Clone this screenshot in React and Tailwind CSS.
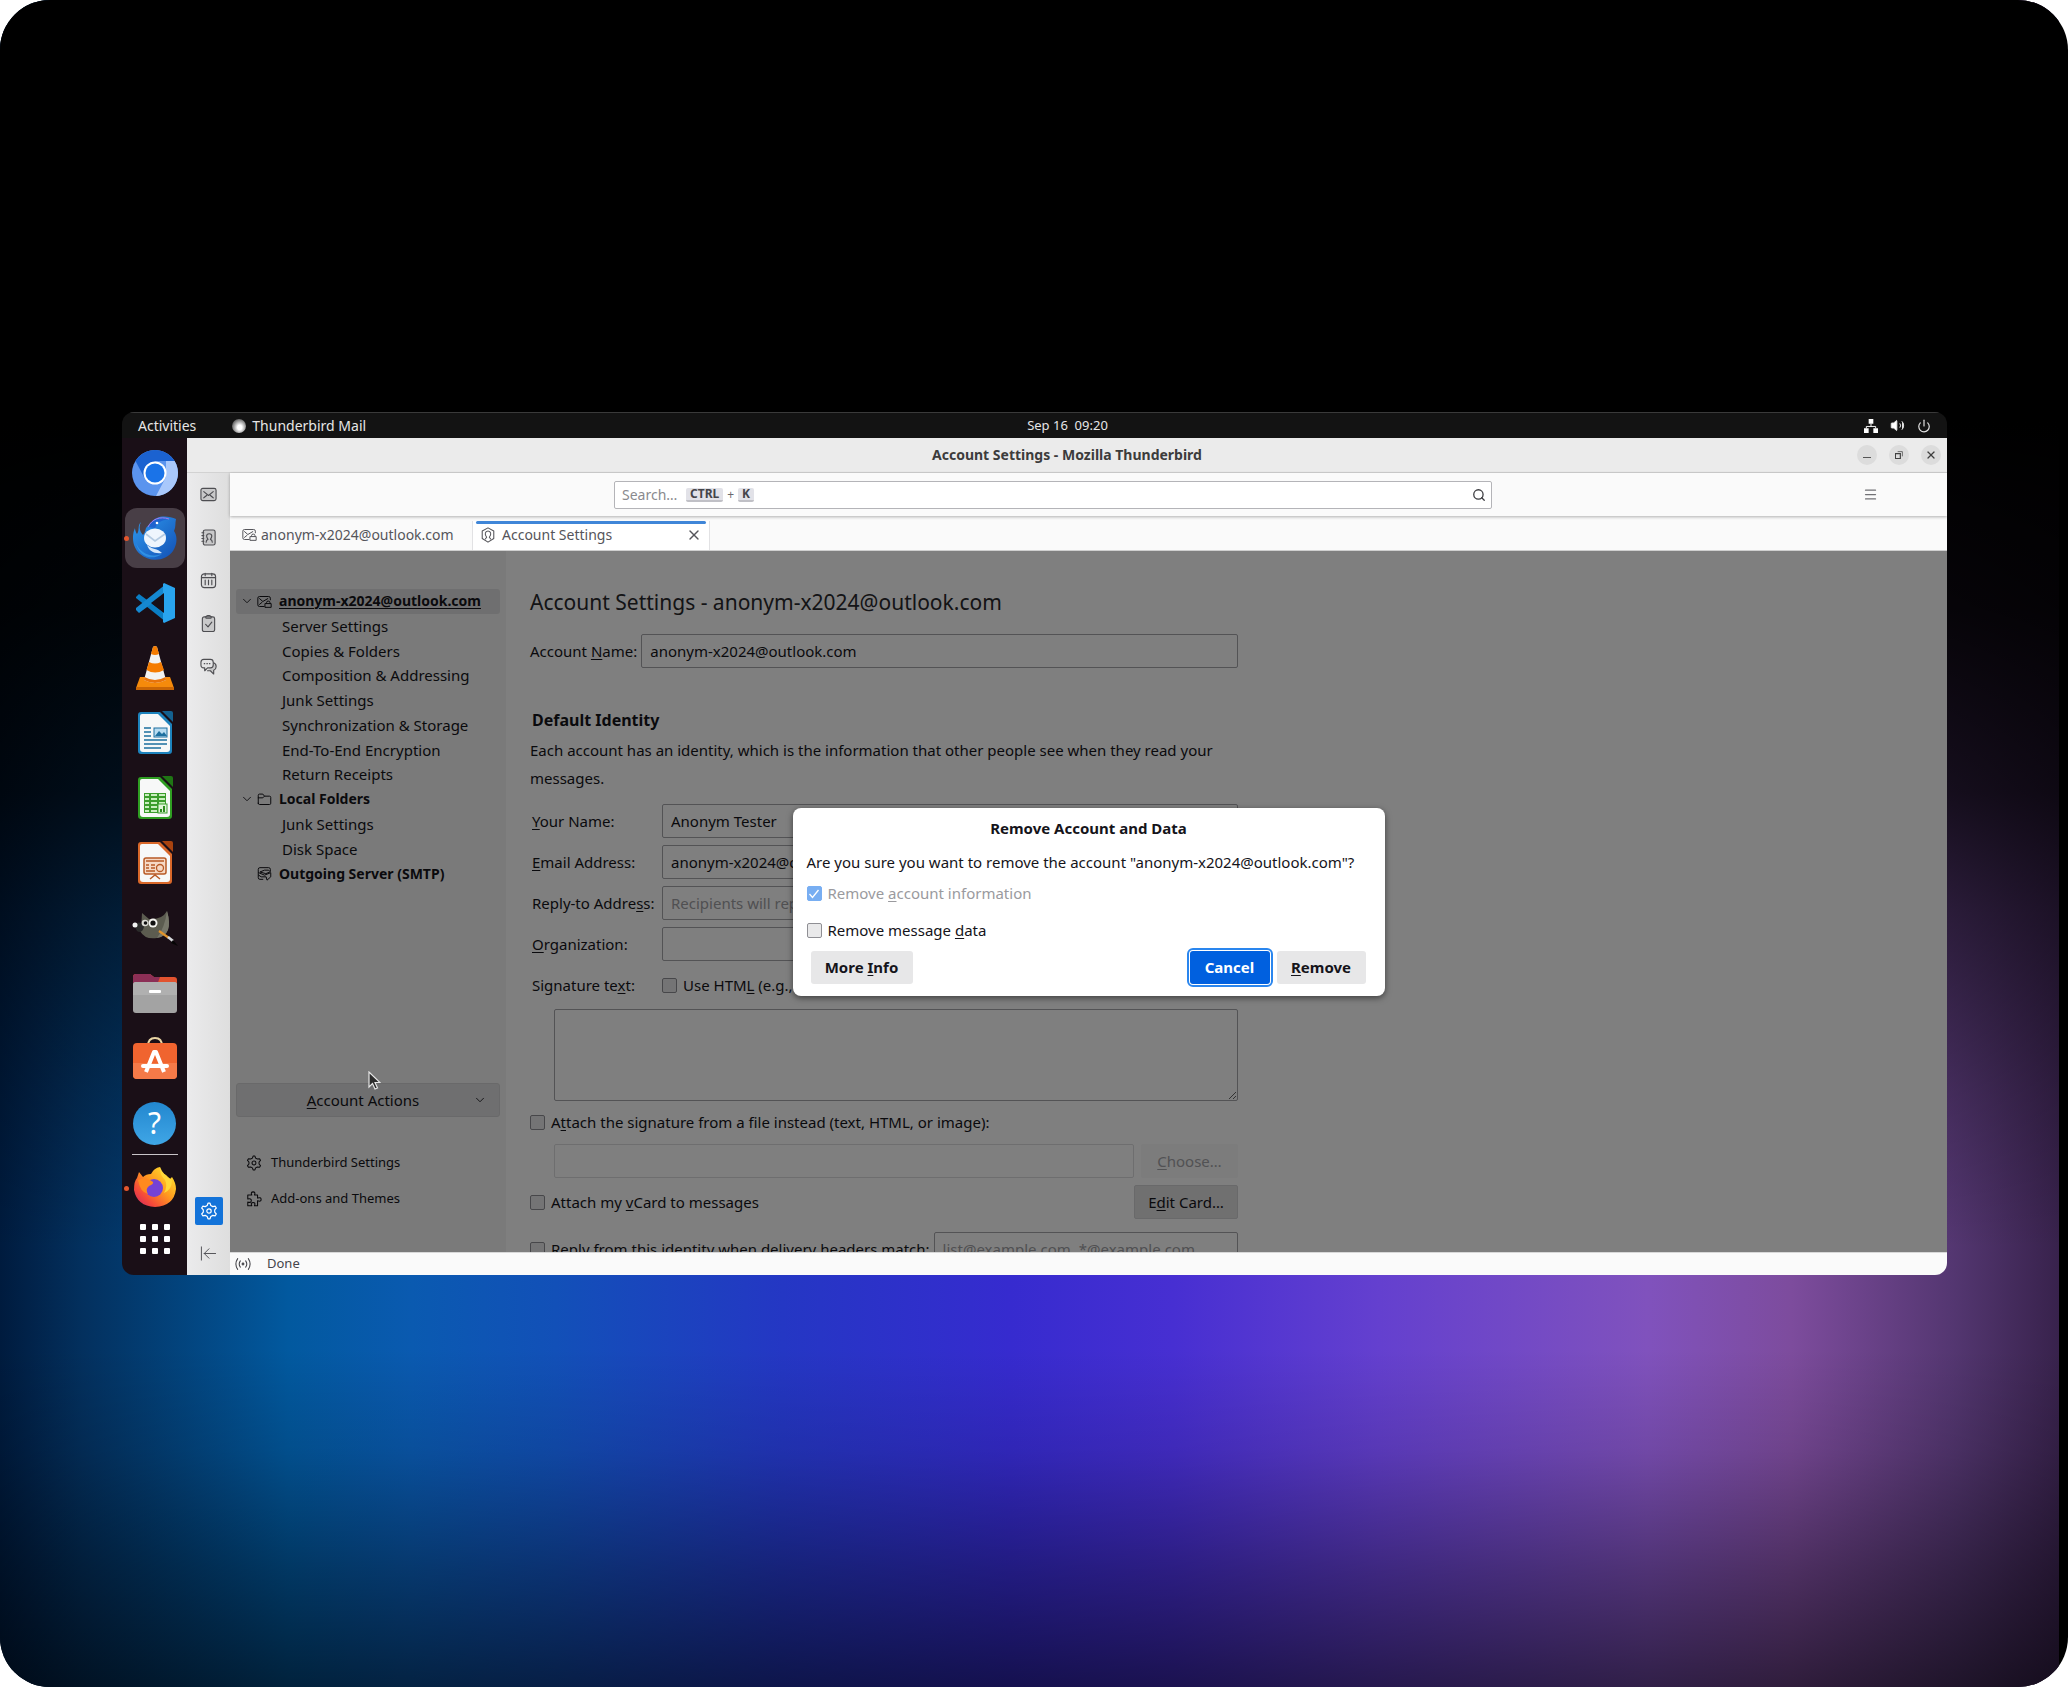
import React from 'react';
import { ChevronDown, Menu, Power, Search, Volume2, X } from 'lucide-react';

/* ---------- Dock artwork ---------- */

const ChromiumIcon = () => (
  <svg className="size-[46px]" viewBox="0 0 46 46">
    <circle cx="23" cy="23" r="23" fill="#5b94ee" />
    <path d="M3.5 11A23 23 0 0 1 42.6 11H23L12 27Z" fill="#1b62d0" />
    <path d="M42.6 11A23 23 0 0 1 24 46L34 27V11Z" fill="#a9c8fb" />
    <circle cx="23" cy="23" r="11.5" fill="#fff" />
    <circle cx="23" cy="23" r="9.5" fill="#1a73e8" />
  </svg>
);

const ThunderbirdIcon = () => (
  <svg className="size-[46px]" viewBox="0 0 46 46">
    <defs>
      <linearGradient id="tb" x1="0" y1="0" x2="1" y2="1">
        <stop offset="0" stopColor="#2f9bf0" />
        <stop offset="1" stopColor="#124fb4" />
      </linearGradient>
    </defs>
    <path
      d="M9 7C5 11 8 15 5 19C3 16 3 13 3 13C-1 22 1 33 8 39C18 48 34 46 41 36C46 28 45 20 42 16C44 12 43 8 44 4C39 2 31 0 25 3C20 5 18 9 14 13C13 17 12 19 11 20C7 16 7 11 9 7Z"
      fill="url(#tb)"
    />
    <path d="M16 12C20 4 28 1 37 4C29 5 25 8 23 13Z" fill="#1e63cf" />
    <path d="M16 12C20 4 28 1 37 4" fill="none" stroke="#a77bea" strokeWidth="1" />
    <path d="M4 28C8 38 18 43 30 39C20 46 7 42 4 28Z" fill="#3aa5f2" opacity=".6" />
    <ellipse cx="23" cy="23" rx="11" ry="9.5" fill="#eef5fd" />
    <path d="M14 19L23 26L33 19" fill="none" stroke="#b5cbe2" strokeWidth="1.6" />
    <path d="M15 30C21 35 25 33 30 38C22 39 17 36 15 30Z" fill="#d3e6fa" />
    <circle cx="25" cy="8" r="1.3" fill="#fff" />
  </svg>
);

const VsCodeIcon = () => (
  <svg className="size-10" viewBox="0 0 40 40">
    <path d="M1 14L4 11L31 31V39L1 15Z" fill="#0a7dc4" />
    <path d="M1 27L4 30L31 10V1L1 25Z" fill="#1588d1" />
    <path d="M29 0L40 5V35L29 40L28 39V1Z" fill="#29a4ee" />
    <path d="M29 10V30L16 20Z" fill="#170f17" />
  </svg>
);

const VlcIcon = () => (
  <svg className="h-11 w-[38px]" viewBox="0 0 38 44">
    <path d="M4 31H34L38 42V44H0V42Z" fill="#f58a0b" />
    <path d="M0 41H38V44H0Z" fill="#c96505" />
    <path d="M17 1Q19 -1 21 1L30 34Q19 40 8 34Z" fill="#f3f3f1" />
    <path d="M17 1Q19 -1 21 1L23 8Q19 10 15 8Z" fill="#f57c00" />
    <path d="M13 16Q19 19 25 16L28 24Q19 29 10.500 24Z" fill="#f57c00" />
    <path d="M8.500 31Q19 37 29.500 31L30 34Q19 40 8 34Z" fill="#e8730a" />
  </svg>
);

const DocShape = ({ color, dark, children }) => (
  <svg className="h-11 w-9" viewBox="0 0 36 44">
    <path d="M4 1H23L35 13V40Q35 43 32 43H4Q1 43 1 40V4Q1 1 4 1Z" fill={color} />
    <path d="M5 3H21L33 15V38Q33 41 30 41H6Q3 41 3 38V5Q3 3 5 3Z" fill="#f7f8f8" />
    <path d="M25 0H34Q36 0 36 2V11Z" fill={dark} />
    {children}
  </svg>
);

const WriterIcon = () => (
  <DocShape color="#1d83bd" dark="#14618f">
    <path d="M7 17H14M7 21H14M7 25H14M7 29H30M7 33H30M7 37H24" stroke="#1d6f9f" strokeWidth="1.700" />
    <rect x="17" y="17" width="13" height="9" fill="#b8dcf1" stroke="#1d6f9f" />
    <path d="M18 25L22 20L25 23L27 21L30 25Z" fill="#1d6f9f" />
  </DocShape>
);

const CalcIcon = () => (
  <DocShape color="#2f9e22" dark="#1f7514">
    <rect x="7" y="17" width="22" height="20" fill="#3b9d2c" />
    <path
      d="M8 18h4v2h-4zM14 18h6v2h-6zM22 18h6v2h-6zM8 22h4v2h-4zM14 22h6v2h-6zM22 22h6v2h-6zM8 26h4v2h-4zM14 26h6v2h-6zM22 26h6v2h-6zM8 30h4v2h-4zM14 30h6v2h-6zM8 34h4v2h-4zM14 34h6v2h-6z"
      fill="#c9efbf"
    />
    <rect x="21" y="28" width="9" height="9" fill="#dff5d8" stroke="#3b9d2c" />
    <path d="M24 36V33M27 36V30" stroke="#2c8a1e" strokeWidth="2" />
  </DocShape>
);

const ImpressIcon = () => (
  <DocShape color="#d9682a" dark="#a8430f">
    <rect x="7" y="17" width="22" height="16" rx="2" fill="#f6d9c5" stroke="#b85a26" strokeWidth="1.500" />
    <path d="M9 20H27M9 24H12M14 24H18M9 27H12M14 27H18M9 30H18" stroke="#b85a26" strokeWidth="1.500" />
    <circle cx="23" cy="27" r="3.500" fill="none" stroke="#b85a26" strokeWidth="1.300" />
    <path d="M18 33V35M13 38L18 34L23 38" fill="none" stroke="#b85a26" strokeWidth="1.500" />
  </DocShape>
);

const GimpIcon = () => (
  <svg className="h-[38px] w-[46px]" viewBox="0 0 46 38">
    <path d="M10 4L17 10Q30 11 35 2Q42 26 25 29Q13 31 8 22Q10 12 10 4Z" fill="#5c5c50" />
    <path d="M35 2Q42 26 25 29Q33 18 35 2Z" fill="#77776a" />
    <path d="M2 16Q8 10 12 18Q10 25 5 22Z" fill="#2b2b2b" />
    <circle cx="3" cy="16" r="2.500" fill="#f1f1f1" />
    <circle cx="13" cy="14" r="3.300" fill="#dcdcd6" />
    <circle cx="21" cy="14" r="4.500" fill="#f4f4f0" />
    <circle cx="13.500" cy="14" r="1.800" fill="#111" />
    <circle cx="21" cy="14" r="2.600" fill="#111" />
    <path d="M27 22L37 29" stroke="#e2942c" strokeWidth="2.200" />
    <path d="M36 28L41 32" stroke="#d8dadd" strokeWidth="2.600" />
    <path d="M41 31L46 37L39 34Z" fill="#050505" />
  </svg>
);

const FilesIcon = () => (
  <svg className="h-10 w-[44px]" viewBox="0 0 44 40">
    <path d="M3 1H17L21 4H41Q44 4 44 7V20H0V4Q0 1 3 1Z" fill="#e2532f" />
    <path d="M3 1H17L21 4H27L24 12H0V4Q0 1 3 1Z" fill="#8c2f56" />
    <rect y="9" width="44" height="31" rx="3" fill="#a3a3a3" />
    <path d="M3 9H41Q44 9 44 12V22H0V12Q0 9 3 9Z" fill="#b0b0b0" />
    <rect x="16" y="17" width="12" height="3" rx="1" fill="#fff" />
  </svg>
);

const SoftwareIcon = () => (
  <svg className="h-[42px] w-[44px]" viewBox="0 0 44 42">
    <path d="M15 9Q15 1 22 1Q29 1 29 9" fill="none" stroke="#e9d5a4" strokeWidth="2" />
    <rect y="6" width="44" height="36" rx="4" fill="#f0642f" />
    <path d="M0 26H44V38Q44 42 40 42H4Q0 42 0 38Z" fill="#f57a48" />
    <path d="M13 35L21 15H23L31 35" fill="none" stroke="#fff" strokeWidth="4" strokeLinejoin="round" />
    <path d="M10 29H34" stroke="#fff" strokeWidth="4" strokeLinecap="round" />
  </svg>
);

const HelpIcon = () => (
  <span className="flex size-[43px] items-center justify-center rounded-full bg-gradient-to-b from-[#2287cf] to-[#3fa6e6] font-['Noto_Sans',sans-serif] text-3xl text-white">
    ?
  </span>
);

const FirefoxIcon = () => (
  <svg className="size-[42px]" viewBox="0 0 42 42">
    <defs>
      <linearGradient id="fx" x1="1" y1="0" x2="0" y2="1">
        <stop offset=".1" stopColor="#ffe22e" />
        <stop offset=".45" stopColor="#ff9a1f" />
        <stop offset=".75" stopColor="#f5483a" />
        <stop offset="1" stopColor="#c4206a" />
      </linearGradient>
    </defs>
    <path
      d="M5 6L9 11Q12 8 17 8Q20 2 26 1Q26 6 32 9L36 13L38 11Q42 17 42 23Q40 40 21 41Q3 40 0 24Q0 15 3 12Z"
      fill="url(#fx)"
    />
    <circle cx="20" cy="22" r="9" fill="#7542d6" />
    <path d="M4 14Q12 10 19 16Q20 18 15 20Q11 23 14 28Q6 26 4 14Z" fill="#ff8a1e" />
    <path d="M26 1Q25 8 31 14Q34 20 30 27Q38 24 38 14Q29 9 26 1Z" fill="#ffd83a" />
  </svg>
);

const AppGridIcon = () => (
  <span className="grid grid-cols-3 gap-[6px]">
    {Array.from({ length: 9 }, (_, i) => (
      <span key={i} className="size-[6px] rounded-[1px] bg-white" />
    ))}
  </span>
);

const DOCK = [
  { name: 'Chromium', Icon: ChromiumIcon },
  { name: 'Thunderbird Mail', Icon: ThunderbirdIcon, active: true },
  { name: 'Visual Studio Code', Icon: VsCodeIcon },
  { name: 'VLC media player', Icon: VlcIcon },
  { name: 'LibreOffice Writer', Icon: WriterIcon },
  { name: 'LibreOffice Calc', Icon: CalcIcon },
  { name: 'LibreOffice Impress', Icon: ImpressIcon },
  { name: 'GIMP', Icon: GimpIcon },
  { name: 'Files', Icon: FilesIcon },
  { name: 'Ubuntu Software', Icon: SoftwareIcon },
  { name: 'Help', Icon: HelpIcon },
];

/* ---------- Line icons ---------- */

const Line = ({ className = 'size-[17px]', children }) => (
  <svg
    className={className}
    viewBox="0 0 18 18"
    fill="none"
    stroke="currentColor"
    strokeWidth="1.200"
    strokeLinecap="round"
    strokeLinejoin="round"
  >
    {children}
  </svg>
);

const MailIcon = () => (
  <Line>
    <rect x="1" y="2.500" width="16" height="13" rx="2" fill="#c9c9ca" />
    <path d="M4 6L9 10L14 6M4 12.500L7 10M14 12.500L11 10" />
  </Line>
);

const AddressBookIcon = () => (
  <Line>
    <rect x="3.500" y="1" width="12.500" height="16" rx="2" fill="#c9c9ca" />
    <path d="M2 4H4M2 7H4M2 10H4M2 13H4" />
    <path d="M6.500 14Q6.500 11.500 8.500 11Q7 9 7 7.500Q7 5 9.700 5Q12.500 5 12.500 7.500Q12.500 9 11 11Q13 11.500 13 14" />
  </Line>
);

const CalendarIcon = () => (
  <Line>
    <rect x="1.500" y="2" width="15" height="14.500" rx="3" fill="#dcdcdd" />
    <path d="M2 6H16M5.500 1.500V4M12.500 1.500V4M5.500 8.500V13.500M9 8.500V13.500M12.500 8.500V13.500" />
  </Line>
);

const TasksIcon = () => (
  <Line>
    <rect x="2.500" y="2" width="13" height="15.500" rx="2" fill="#c9c9ca" />
    <path d="M6 2Q9 -1 12 2L11.500 3.500H6.500ZM6 10L8.500 12.500L12.500 7.500" />
  </Line>
);

const ChatIcon = () => (
  <Line>
    <path d="M14 5Q17.500 6 17 9.500Q17 12 14.500 13V17L11 13.500H8" fill="#c9c9ca" />
    <path d="M4 1.500H11Q14 1.500 14 4.500V7.500Q14 10.500 11 10.500H8L5 13.500V10.500H4Q1 10.500 1 7.500V4.500Q1 1.500 4 1.500Z" fill="#e4e4e5" />
    <path d="M4.500 6H5M7.300 6H7.800M10 6H10.500" />
  </Line>
);

const GearIcon = ({ className }) => (
  <Line className={className}>
    <path d="M7.200 3.500L8 1.200H10L10.800 3.500L12.800 4.600L15.200 4.200L16.300 6L14.700 7.900V10.100L16.300 12L15.200 13.800L12.800 13.400L10.800 14.500L10 16.800H8L7.200 14.500L5.200 13.400L2.800 13.800L1.700 12L3.300 10.100V7.900L1.700 6L2.800 4.200L5.200 4.600Z" />
    <circle cx="9" cy="9" r="2.200" />
  </Line>
);

const PuzzleIcon = () => (
  <Line className="size-4">
    <path d="M6.500 4.500Q5 1 8 1Q11 1 9.500 4.500H13V8Q17 6.500 17 9.500Q17 12.500 13 11V16.500H9.500Q11 13 8 13Q5 13 6.500 16.500H2V12.500Q6 13.500 6 10.700Q6 8 2 9V4.500Z" />
  </Line>
);

const CollapseIcon = () => (
  <Line>
    <path d="M1.500 2V16M16.500 9H4.500M9.500 4L4.500 9L9.500 14" strokeWidth="1" />
  </Line>
);

const MailLockIcon = () => (
  <Line className="size-[15px]">
    <path d="M8.500 15H3Q1 15 1 13V5Q1 3 3 3H14Q16 3 16 5V7M3 5.500L7 9L13 5.500M3 12.500L6 10" />
    <path d="M10 11.500H17V16H10ZM11.500 11V10Q11.500 8.500 13.500 8.500Q15.500 8.500 15.500 10V11" />
  </Line>
);

const OutgoingIcon = () => (
  <Line className="size-[15px]">
    <path d="M7 16H3.500Q1.500 16 1.500 14V4Q1.500 2 3.500 2H14Q16 2 16 4V6M4 7L9 5H14L16 7L11 9Z" />
    <path d="M2 8L9 11L16.500 8V13L12 17L11 13H5L2 11" />
  </Line>
);

const FolderIcon = () => (
  <Line className="size-[15px]">
    <path d="M1.500 13.500V4Q1.500 2.500 3 2.500H7L9 5H15Q16.500 5 16.500 6.500V13.500Q16.500 15 15 15H3Q1.500 15 1.500 13.500ZM1.500 7H7L9 5" />
  </Line>
);

const AccountTabIcon = () => (
  <Line className="size-4">
    <path d="M9 1L15.500 4.500V13L9 17L2.500 13V4.500Z" />
    <path d="M6 13.500L7.500 11.500Q5.500 9 6 7Q6.500 4.500 9 4.500Q11.500 4.500 12 7Q12.500 9 10.500 11.500L12 13.500" />
  </Line>
);

const NetworkIcon = () => (
  <svg className="size-[14px]" viewBox="0 0 15 15" fill="#fff">
    <path d="M5 0h5v5H5zM0 10h5v5H0zM10 10h5v5h-5z" />
    <path d="M7.500 5V8M2.500 10V8H12.500V10" fill="none" stroke="#fff" />
  </svg>
);

const StatusIcon = () => (
  <Line className="size-4">
    <path d="M3 3Q-1 9 3 15M6 5.500Q3.500 9 6 12.500M15 3Q19 9 15 15M12 5.500Q14.500 9 12 12.500" />
    <circle cx="9" cy="9" r="1" />
  </Line>
);

const Cursor = () => (
  <svg className="h-[19px] w-[13px]" viewBox="0 0 13 19">
    <path d="M1 1V16L4.500 12.500L7 18L9.500 17L7 11.500H12Z" fill="#2c2c2c" stroke="#e6e6e6" strokeWidth="1.200" />
  </svg>
);

/* ---------- Small parts ---------- */

// Underlined access key
const Key = ({ children }) => <span className="underline decoration-1 underline-offset-2">{children}</span>;

const CheckBox = ({ id, className = 'border-[#8f8f94] bg-[#e9e9ea]', children, ...rest }) => (
  <div className="flex items-center gap-[6px]">
    <span className="grid size-[15px] shrink-0 place-items-center">
      <input
        id={id}
        type="checkbox"
        className={`col-start-1 row-start-1 size-[15px] appearance-none rounded-[2px] border ${className}`}
        {...rest}
      />
      {rest.defaultChecked && (
        <svg className="pointer-events-none col-start-1 row-start-1 size-3" viewBox="0 0 12 12" fill="none" stroke="#fff" strokeWidth="1.300">
          <path d="M1.500 6L4.500 9.500L10.500 2" />
        </svg>
      )}
    </span>
    <label htmlFor={id} className={rest.disabled ? 'text-[#9a9a9e]' : ''}>
      {children}
    </label>
  </div>
);

const FIELD =
  'h-[34px] w-full min-w-0 rounded-[2px] border border-[#a6a6aa] bg-white px-2 placeholder:text-[#a0a0a4] outline-none';

const TREE = [
  { label: 'anonym-x2024@outlook.com', Icon: MailLockIcon, open: true, selected: true },
  { label: 'Server Settings' },
  { label: 'Copies & Folders' },
  { label: 'Composition & Addressing' },
  { label: 'Junk Settings' },
  { label: 'Synchronization & Storage' },
  { label: 'End-To-End Encryption' },
  { label: 'Return Receipts' },
  { label: 'Local Folders', Icon: FolderIcon, open: true },
  { label: 'Junk Settings' },
  { label: 'Disk Space' },
  { label: 'Outgoing Server (SMTP)', Icon: OutgoingIcon },
];

/* ---------- Desktop shell ---------- */

const TopBar = () => (
  <header className="grid h-[26px] grid-cols-[1fr_auto_1fr] items-center border-t border-[#3a3a3a] bg-[#131313] text-sm text-[#e6e6e6]">
    <div className="flex items-center pl-4">
      <button type="button" className="mr-9">Activities</button>
      <button type="button" className="flex items-center gap-[6px]">
        <span className="size-[14px] rounded-full bg-radial-[at_55%_60%] from-white from-20% to-[#4a4a4a] to-80%" />
        Thunderbird Mail
      </button>
    </div>
    <time className="ml-[66px] text-[13px] whitespace-pre">Sep 16  09:20</time>
    <div className="flex items-center justify-end gap-[12px] pr-4">
      <NetworkIcon />
      <Volume2 className="size-[15px] fill-white" strokeWidth={1.5} />
      <Power className="size-[14px]" strokeWidth={2} />
    </div>
  </header>
);

const Dock = () => (
  <nav aria-label="Dock" className="flex w-[65px] shrink-0 flex-col items-center bg-[#1a0f17] pt-[5px]">
    <ul className="flex w-full flex-col gap-[5px]">
      {DOCK.map(({ name, Icon, active }) => (
        <li key={name} className="relative flex justify-center">
          {active && <span className="absolute top-[28px] left-[2px] size-[5px] rounded-full bg-[#e4572e]" />}
          <button
            type="button"
            aria-label={name}
            className={`flex size-[60px] items-center justify-center rounded-xl ${active ? 'bg-[#483e46]' : ''}`}
          >
            <Icon />
          </button>
        </li>
      ))}
    </ul>
    <hr className="mt-px w-[46px] border-[#c9c4c8]" />
    <div className="relative flex w-full justify-center pt-[2px]">
      <span className="absolute top-[31px] left-[2px] size-[5px] rounded-full bg-[#e4572e]" />
      <button type="button" aria-label="Firefox" className="flex size-[60px] items-center justify-center">
        <FirefoxIcon />
      </button>
    </div>
    <button type="button" aria-label="Show Applications" className="flex h-11 w-[60px] items-center justify-center">
      <AppGridIcon />
    </button>
  </nav>
);

const TitleBar = () => (
  <div className="grid h-[35px] grid-cols-[1fr_auto_1fr] items-center border-b border-[#d2d2d2] bg-[#ebebeb]">
    <h1 className="col-start-2 text-sm font-bold text-[#3c3c3c]">Account Settings - Mozilla Thunderbird</h1>
    <div className="flex justify-end gap-3 pr-[6px] text-[#3f3f3f]">
      <button type="button" aria-label="Minimize" className="flex size-5 items-center justify-center rounded-full bg-[#dcdcdc] pt-1">
        <span className="h-px w-2 bg-[#555]" />
      </button>
      <button type="button" aria-label="Restore" className="flex size-5 items-center justify-center rounded-full bg-[#dcdcdc]">
        <svg className="size-2" viewBox="0 0 9 9" fill="none" stroke="currentColor">
          <path d="M.500 3H6V8.500H.500Z" strokeWidth="1.300" />
          <path d="M3 .700H8.300V6" strokeWidth=".8" />
        </svg>
      </button>
      <button type="button" aria-label="Close" className="flex size-5 items-center justify-center rounded-full bg-[#dcdcdc]">
        <X className="size-3" strokeWidth={2.5} />
      </button>
    </div>
  </div>
);

const Spaces = () => (
  <nav aria-label="Spaces" className="flex w-[43px] shrink-0 flex-col bg-gradient-to-r from-[#ebebec] to-[#dedede] text-[#4e4e52]">
    {[
      ['Mail', MailIcon],
      ['Address Book', AddressBookIcon],
      ['Calendar', CalendarIcon],
      ['Tasks', TasksIcon],
      ['Chat', ChatIcon],
    ].map(([name, Icon]) => (
      <button key={name} type="button" aria-label={name} className="flex h-[43px] items-center justify-center">
        <Icon />
      </button>
    ))}
    <div className="mt-auto flex h-[43px] items-center justify-center">
      <button type="button" aria-label="Settings" className="flex size-7 items-center justify-center rounded-[2px] bg-[#1373d9] text-white">
        <GearIcon className="size-[18px]" />
      </button>
    </div>
    <button type="button" aria-label="Collapse" className="flex h-[43px] items-center justify-center">
      <CollapseIcon />
    </button>
  </nav>
);

const Toolbar = () => (
  <div className="z-10 flex h-[43px] items-center bg-[#fafafa] pl-96 shadow-[0_1px_3px_rgba(0,0,0,0.3)]">
    <div className="flex h-7 w-[878px] items-center rounded-[2px] border border-[#b4b4b8] bg-white pr-[5px] pl-[7px] text-[13px] text-[#6a6a6e]">
      <input aria-label="Search" placeholder="Search…" className="w-16 text-sm outline-none placeholder:text-[#8a8a8e]" />
      <kbd className="rounded-[2px] border-b-2 border-[#c0c0c6] bg-[#e2e2e8] px-1 font-['Noto_Sans',sans-serif] text-xs leading-3 font-bold text-[#45454a]">CTRL</kbd>
      <span className="px-1 text-xs">+</span>
      <kbd className="rounded-[2px] border-b-2 border-[#c0c0c6] bg-[#e2e2e8] px-1 font-['Noto_Sans',sans-serif] text-xs leading-3 font-bold text-[#45454a]">K</kbd>
      <button type="button" aria-label="Run search" className="ml-auto text-[#3c3c40]">
        <Search className="size-[14px]" strokeWidth={2.2} />
      </button>
    </div>
    <button type="button" aria-label="Menu" className="mr-[69px] ml-auto text-[#707074]">
      <Menu className="size-[15px]" strokeWidth={2} />
    </button>
  </div>
);

const Tabs = () => (
  <div className="flex h-[35px] border-b border-[#cfcfcf] bg-[#fafafa] pt-[5px] text-sm text-[#55555a]">
    <button type="button" className="flex w-[242px] items-center gap-1 pb-[2px] pl-3">
      <MailLockIcon />
      anonym-x2024@outlook.com
    </button>
    <div className="flex w-[238px] flex-col border-x border-[#e2e2e4] bg-white px-[3px]">
      <span className="h-[3px] shrink-0 rounded-full bg-[#3f86d8]" />
      <div className="flex flex-1 items-center pr-1 pb-1 pl-1">
        <button type="button" className="flex flex-1 items-center gap-[6px]">
          <AccountTabIcon />
          Account Settings
        </button>
        <button type="button" aria-label="Close tab">
          <X className="size-4" strokeWidth={2} />
        </button>
      </div>
    </div>
  </div>
);

/* ---------- Account settings page ---------- */

const Sidebar = () => (
  <aside className="flex w-[276px] shrink-0 flex-col bg-[#f4f4f4] px-[6px] pt-[38px]">
    <ul className="flex h-[297px] flex-col">
      {TREE.map(({ label, Icon, open, selected }, i) => (
        <li key={i} className={`flex flex-1 items-center rounded-[3px] ${selected ? 'bg-[#dfdfe0]' : ''}`}>
          {Icon ? (
            <>
              <span className="flex w-[21px] justify-center">{open && <ChevronDown className="size-[14px]" strokeWidth={1.5} />}</span>
              <Icon />
              <a href="#account" className={`pl-[7px] text-sm font-bold ${selected ? 'underline decoration-1 underline-offset-2' : ''}`}>
                {label}
              </a>
            </>
          ) : (
            <a href="#section" className="pl-[46px]">{label}</a>
          )}
        </li>
      ))}
    </ul>
    <div className="mt-auto pb-[35px]">
      <button type="button" className="flex h-[34px] w-[264px] items-center rounded-[3px] border border-[#d3d3d4] bg-[#dfdfe0] pr-3">
        <span className="flex-1 pl-4"><Key>A</Key>ccount Actions</span>
        <ChevronDown className="size-[14px]" strokeWidth={1.5} />
      </button>
      <div className="mt-7 flex flex-col text-[13px]">
        <a href="#settings" className="flex h-9 items-center gap-[9px] pl-[10px]">
          <GearIcon className="size-4" />
          Thunderbird Settings
        </a>
        <a href="#addons" className="flex h-9 items-center gap-[9px] pl-[10px]">
          <PuzzleIcon />
          Add-ons and Themes
        </a>
      </div>
    </div>
  </aside>
);

const SettingsForm = () => (
  <main className="flex-1 bg-white pt-[31px] pl-6">
    <form className="flex w-[708px] flex-col">
      <h2 className="text-[21px] leading-10 text-[#28282c]">Account Settings - anonym-x2024@outlook.com</h2>
      <div className="mt-3 flex items-center gap-1">
        <label htmlFor="account-name" className="shrink-0">Account <Key>N</Key>ame:</label>
        <input id="account-name" className={FIELD} defaultValue="anonym-x2024@outlook.com" />
      </div>

      <h3 className="mt-10 pl-[2px] text-base leading-6 font-bold">Default Identity</h3>
      <p className="mt-1 leading-7">
        Each account has an identity, which is the information that other people see when they read your messages.
      </p>

      <div className="mt-3 grid grid-cols-[130px_1fr] items-center gap-y-[7px] pl-[2px]">
        <label htmlFor="your-name"><Key>Y</Key>our Name:</label>
        <input id="your-name" className={FIELD} defaultValue="Anonym Tester" />
        <label htmlFor="email"><Key>E</Key>mail Address:</label>
        <input id="email" className={FIELD} defaultValue="anonym-x2024@outlook.com" />
        <label htmlFor="reply-to">Reply-to Addre<Key>s</Key>s:</label>
        <input id="reply-to" className={FIELD} placeholder="Recipients will reply to this other address" />
        <label htmlFor="organization"><Key>O</Key>rganization:</label>
        <input id="organization" className={FIELD} />
        <label htmlFor="signature">Signature te<Key>x</Key>t:</label>
        <div className="flex h-[34px] items-center">
          <CheckBox id="use-html">Use HTM<Key>L</Key> (e.g., &lt;b&gt;bold&lt;/b&gt;)</CheckBox>
        </div>
      </div>

      <textarea id="signature" className="mt-[7px] ml-6 h-[92px] rounded-[2px] border border-[#a6a6aa] bg-white" />

      <div className="flex h-[43px] items-center">
        <CheckBox id="attach-file">A<Key>t</Key>tach the signature from a file instead (text, HTML, or image):</CheckBox>
      </div>
      <div className="flex gap-[7px] pl-6">
        <input aria-label="Signature file" disabled className="h-[34px] min-w-0 flex-1 rounded-[2px] border border-[#dcdcde] bg-white" />
        <button type="button" disabled className="h-[34px] w-[97px] rounded-[2px] bg-[#f8f8f8] text-[#a4a4a8]">
          <Key>C</Key>hoose…
        </button>
      </div>
      <div className="mt-[7px] flex items-center justify-between">
        <CheckBox id="vcard">Attach my <Key>v</Key>Card to messages</CheckBox>
        <button type="button" className="h-[34px] w-[104px] rounded-[2px] border border-[#d3d3d4] bg-[#e0e0e1]">
          E<Key>d</Key>it Card…
        </button>
      </div>
      <div className="mt-[13px] flex items-center gap-1 whitespace-nowrap">
        <CheckBox id="headers">Reply from this identity when delivery headers match:</CheckBox>
        <input aria-label="Delivery headers" className={FIELD} placeholder="list@example.com, *@example.com" />
      </div>
    </form>
  </main>
);

const RemoveDialog = () => (
  <section
    role="dialog"
    aria-modal="true"
    aria-labelledby="dialog-title"
    className="w-[592px] rounded-[8px] bg-white px-[14px] pt-2 pb-3 shadow-[0_2px_6px_rgba(0,0,0,0.5)]"
  >
    <h2 id="dialog-title" className="text-center leading-6 font-bold">Remove Account and Data</h2>
    <p className="mt-[10px] leading-6 whitespace-nowrap">Are you sure you want to remove the account "anonym-x2024@outlook.com"?</p>
    <div className="mt-[8px] flex h-6 items-center">
      <CheckBox id="remove-info" defaultChecked disabled className="border-[#78aef2] bg-[#78aef2]">
        Remove <Key>a</Key>ccount information
      </CheckBox>
    </div>
    <div className="mt-[13px] flex h-6 items-center">
      <CheckBox id="remove-data">Remove message <Key>d</Key>ata</CheckBox>
    </div>
    <div className="mt-2 flex gap-[7px] pr-[5px] pl-1 font-bold">
      <button type="button" className="mr-auto h-[33px] w-[102px] rounded-[3px] bg-[#e7e7e8]">
        More <Key>I</Key>nfo
      </button>
      <button type="button" className="h-[33px] w-[80px] rounded-[3px] bg-[#0060df] text-white outline-2 outline-offset-1 outline-[#2a86ee]">
        Cancel
      </button>
      <button type="button" className="h-[33px] w-[89px] rounded-[3px] bg-[#e7e7e8]">
        <Key>R</Key>emove
      </button>
    </div>
  </section>
);

const App = () => (
  <div className="bg-white font-['Noto_Sans',sans-serif] text-[15px] text-[#15141a]">
    <div className="overflow-hidden rounded-[50px] bg-black pr-[9px]">
      <div className="bg-[linear-gradient(to_right,#001b3e_0%,#03305e_4%,#02599f_14%,#0a5ab0_20%,#1250b8_27%,#2437c4_38%,#362bcf_49%,#472fd2_57%,#6440cf_67%,#8052bd_80%,#7d4c9d_87%,#533670_95%,#38224c_100%)]">
        <div className="flex min-h-screen items-center bg-[linear-gradient(to_bottom,#000_0%,#000_25%,rgba(0,0,0,0.93)_36%,rgba(0,0,0,0.75)_47%,rgba(0,0,0,0.5)_54%,rgba(0,0,0,0.2)_65%,transparent_74%,transparent_80%,rgba(0,0,0,0.12)_86%,rgba(0,0,0,0.38)_93%,rgba(0,0,0,0.62)_100%)] pr-28 pl-[122px]">
          <div className="w-full overflow-hidden rounded-xl">
            <TopBar />
            <div className="flex">
              <Dock />
              <div className="flex min-w-0 flex-1 flex-col">
                <TitleBar />
                <div className="flex flex-1">
                  <Spaces />
                  <div className="flex min-w-0 flex-1 flex-col">
                    <Toolbar />
                    <Tabs />
                    <div className="relative flex h-[701px] overflow-hidden">
                      <Sidebar />
                      <SettingsForm />
                      <div className="absolute inset-0 flex items-center justify-center bg-black/50">
                        <RemoveDialog />
                      </div>
                      <span className="pointer-events-none absolute top-[520px] left-[138px]">
                        <Cursor />
                      </span>
                    </div>
                    <footer className="flex h-[23px] items-center gap-4 border-t border-[#d8d8d8] bg-[#fafafa] pl-[5px] text-[13px] text-[#45454a]">
                      <StatusIcon />
                      Done
                    </footer>
                  </div>
                </div>
              </div>
            </div>
          </div>
        </div>
      </div>
    </div>
  </div>
);

export default App;
